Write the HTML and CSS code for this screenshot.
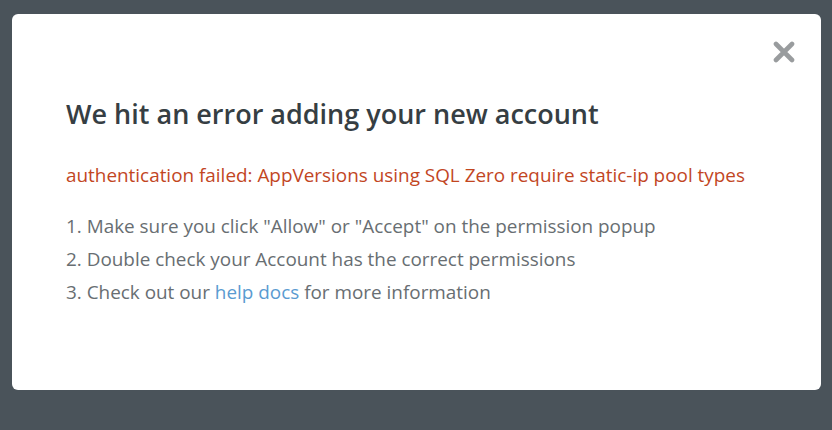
FILE: index.html
```html
<!DOCTYPE html>
<html>
<head>
<meta charset="utf-8">
<link rel="stylesheet" href="styles.css">
</head>
<body>
<div class="overlay">
  <div class="modal">
    <div class="close-row">
      <button class="close" aria-label="Close">
        <svg width="22" height="22" viewBox="0 0 22 22"><path d="M3 3 L19 19 M19 3 L3 19" stroke="#999c9e" stroke-width="4.6" stroke-linecap="round"/></svg>
      </button>
    </div>
    <h1 class="title">We hit an error adding your new account</h1>
    <p class="error">authentication failed: AppVersions using SQL Zero require static-ip pool types</p>
    <ol class="steps">
      <li>Make sure you click "Allow" or "Accept" on the permission popup</li>
      <li>Double check your Account has the correct permissions</li>
      <li>Check out our <a href="#" class="link">help docs</a> for more information</li>
    </ol>
  </div>
</div>
</body>
</html>
```
FILE: styles.css
```css
* { box-sizing: border-box; }
html, body { margin: 0; padding: 0; }
body {
  width: 832px;
  height: 430px;
  background: #4a535a;
  font-family: "Open Sans", sans-serif;
  overflow: hidden;
}
.overlay {
  padding: 14px 11px 0 12px;
}
.modal {
  width: 809px;
  height: 376px;
  background: #fff;
  border-radius: 6px;
  padding: 27px 26px 0 54px;
}
.close-row {
  display: flex;
  justify-content: flex-end;
  height: 22px;
}
.close {
  border: 0;
  background: none;
  padding: 0;
  width: 22px;
  height: 22px;
  cursor: pointer;
  display: block;
}
.close svg { display: block; }
.title {
  margin: 34px 0 0 0;
  font-size: 27px;
  font-weight: 600;
  color: #363e43;
  line-height: 34px;
}
.error {
  margin: 31px 0 0 0;
  font-size: 18.9px;
  line-height: 26px;
  color: #c2461f;
}
.steps {
  margin: 22px 0 0 0;
  padding: 0;
  list-style: none;
  counter-reset: step;
  font-size: 18.9px;
  line-height: 33px;
  color: #686e72;
}
.steps li { counter-increment: step; }
.steps li::before { content: counter(step) ". "; }
.link { color: #5a9bd1; text-decoration: none; }
```
